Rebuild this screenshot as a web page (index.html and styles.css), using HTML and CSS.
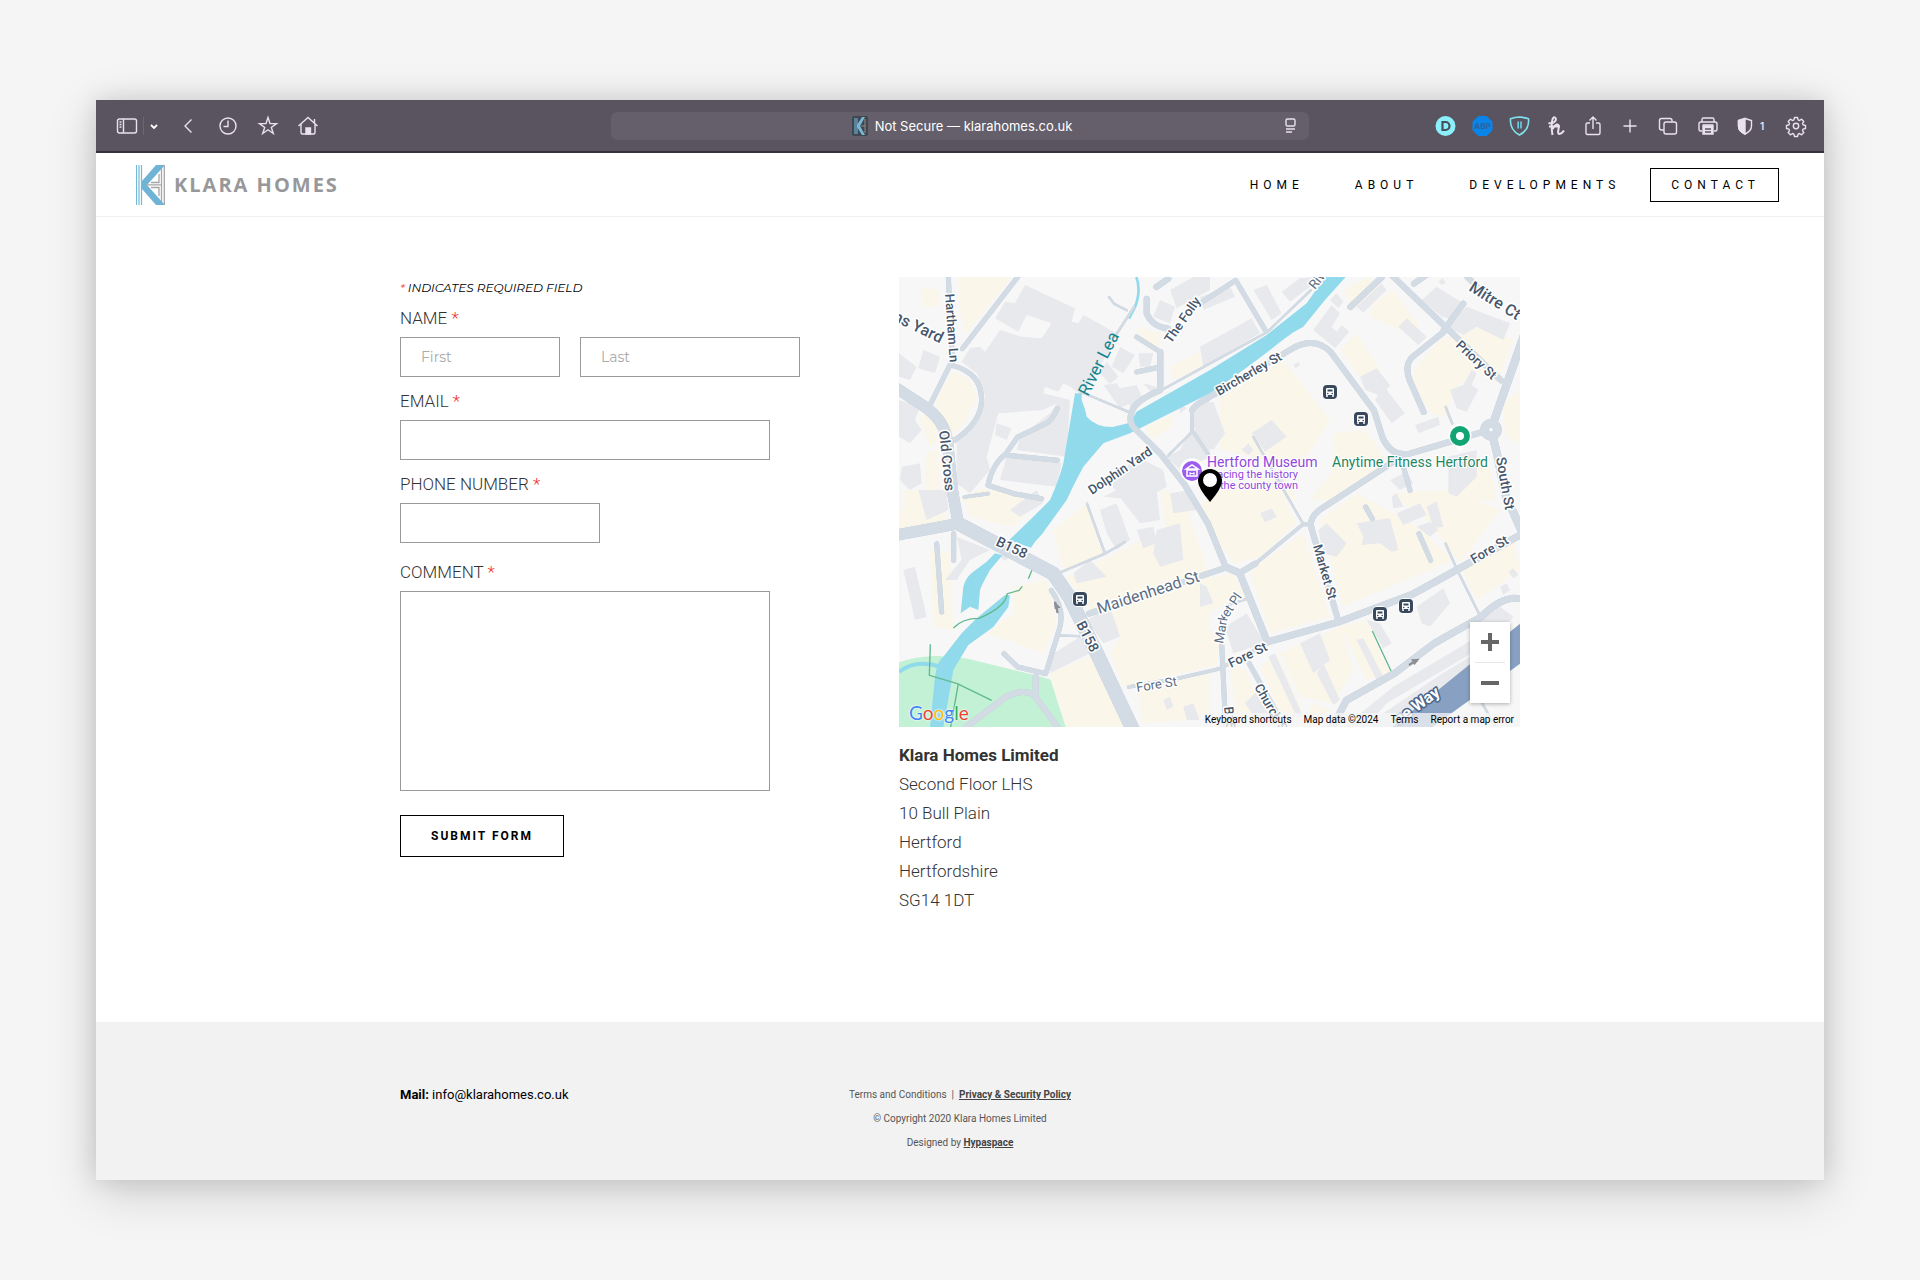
FILE: index.html
```html
<!DOCTYPE html>
<html lang="en">
<head>
<meta charset="utf-8">
<meta name="viewport" content="width=device-width, initial-scale=1">
<title>Contact | Klara Homes</title>
<link rel="stylesheet" href="styles.css">
</head>
<body>
<div class="window">
  <div class="toolbar">
    <div class="tools tools-left">
      <div class="tool-pair">
        <button class="tool" aria-label="Sidebar"><svg width="24" height="24" viewBox="0 0 24 24"><rect x="2.500" y="5" width="19" height="14" rx="2"/><path d="M8.500 5v14M4.500 8h2M4.500 10.500h2M4.500 13h2"/></svg></button>
        <span class="divider"></span>
        <button class="tool tool-small" aria-label="Tab groups"><svg width="12" height="24" viewBox="0 0 12 24"><path class="heavy" d="M3 11l3 3 3-3"/></svg></button>
      </div>
      <button class="tool" aria-label="Back"><svg width="24" height="24" viewBox="0 0 24 24"><path d="M15.500 5.500L9 12l6.500 6.500"/></svg></button>
      <button class="tool" aria-label="History"><svg width="24" height="24" viewBox="0 0 24 24"><circle cx="12" cy="12" r="8"/><path d="M12 6.500V12.500H7.500"/></svg></button>
      <button class="tool" aria-label="Bookmarks"><svg width="24" height="24" viewBox="0 0 24 24"><path d="M12 3.500l2 6 6.500.1-5.200 3.800 2 6.100-5.300-3.700-5.300 3.700 2-6.100L3.500 9.600l6.500-.1z"/></svg></button>
      <button class="tool" aria-label="Home"><svg width="24" height="24" viewBox="0 0 24 24"><path d="M2.500 12L12 3.500l9.500 8.500M5 10v8.500q0 1.500 1.500 1.500h11q1.500 0 1.500-1.500V10M18.500 9V5"/><path class="solid" d="M10 20v-6h4.500v6z"/></svg></button>
    </div>
    <div class="address">
      <svg class="favicon" width="16" height="20" viewBox="0 0 16 20"><rect width="16" height="20" rx="2" fill="#3f4751"/><path d="M3 2v16M5 2v16" stroke="#79bfe0"/><path d="M13 1h-3L5 9v2l5 8h3l-5-9z" fill="#79b9d8"/><path d="M13 3v14M9 10h4" stroke="#9a8b86"/></svg>
      <span>Not Secure — klarahomes.co.uk</span>
      <button class="tool reader" aria-label="Reader"><svg width="16" height="20" viewBox="0 0 16 20"><rect x="3" y="4" width="9" height="7" rx="1.500"/><path d="M3 14h9M3 17h6"/></svg></button>
    </div>
    <div class="tools tools-right">
      <div class="extensions">
        <button class="tool" aria-label="Dashlane"><svg width="24" height="24" viewBox="0 0 24 24"><circle cx="12.500" cy="12" r="10" fill="#8cf0fa" stroke="none"/><path d="M9.500 8h3a4 4 0 0 1 0 8h-3z" fill="none" stroke="#46505a" stroke-width="2.200"/></svg></button>
        <button class="tool" aria-label="Adblock Plus"><svg width="24" height="24" viewBox="0 0 24 24"><path d="M8.300 2h8.400l5.800 5.800v8.400l-5.800 5.800H8.300l-5.800-5.800V7.800z" fill="#0a84e8" stroke="none"/><text x="12.500" y="15" class="abp">ABP</text></svg></button>
        <button class="tool" aria-label="Privacy shield"><svg width="24" height="24" viewBox="0 0 24 24"><path d="M12.500 3q4.500.3 9 1.800 1 11-9 16.200-10-5.200-9-16.200 4.500-1.500 9-1.800z" stroke="#7fe3ee" stroke-width="1.600"/><path d="M11.200 7.500v7M14 7.500v7" stroke="#6fd0e8" stroke-width="1.600"/></svg></button>
        <button class="tool" aria-label="Honey"><svg width="24" height="24" viewBox="0 0 24 24"><path d="M4.500 9c6 1.500 9-4 6.500-5.500S6.500 9 8.500 21M8.800 15c2-5 6-6 6-2.500 0 3-2 7.500.7 7.500 2 0 3-1.500 4.500-3.500M5 12.500h11" stroke-width="2"/></svg></button>
        <button class="tool" aria-label="Share"><svg width="24" height="24" viewBox="0 0 24 24"><path d="M9 9H6.500Q5 9 5 10.500v8.500q0 1.500 1.500 1.500h11q1.500 0 1.500-1.500v-8.500Q19 9 17.500 9H15M12 15V3M8.500 6.500L12 3l3.500 3.500"/></svg></button>
        <button class="tool" aria-label="New tab"><svg width="24" height="24" viewBox="0 0 24 24"><path d="M12 5.500v13M5.500 12h13"/></svg></button>
      </div>
      <div class="actions">
        <button class="tool" aria-label="Tab overview"><svg width="24" height="24" viewBox="0 0 24 24"><rect x="8" y="8" width="12.500" height="12" rx="2"/><path d="M8 16H5.500Q3.500 16 3.500 14V6.500q0-2 2-2H14q2 0 2 2V8"/></svg></button>
        <button class="tool" aria-label="Print"><svg width="24" height="24" viewBox="0 0 24 24"><path d="M6 8V5.500Q6 4 7.500 4h9Q18 4 18 5.500V8M6 17H4.500Q3 17 3 15.500V10q0-2 2-2h14q2 0 2 2v5.500q0 1.500-1.500 1.500H18M6.500 11h11"/><path class="solid" d="M7 12h10v8H7z"/><path d="M9 15h6M9 18h6" stroke="#5a5460"/></svg></button>
        <button class="tool tool-wide" aria-label="Privacy report"><svg width="20" height="24" viewBox="0 0 20 24"><path d="M9 4.500l6.500 2v5.500q0 5-6.500 8-6.500-3-6.500-8V6.500z"/><path class="solid" d="M9 4.500v15.500q-6.500-3-6.500-8V6.500z"/></svg><span class="count">1</span></button>
        <button class="tool" aria-label="Settings"><svg width="24" height="24" viewBox="0 0 24 24"><circle cx="12" cy="12" r="2.700"/><path d="M10.500 3.500h3l.6 2.400 1.400.6 2.100-1.300 2.200 2.200-1.300 2.100.6 1.400 2.400.6v3l-2.400.6-.6 1.400 1.300 2.100-2.200 2.200-2.100-1.300-1.400.6-.6 2.400h-3l-.6-2.400-1.400-.6-2.100 1.300-2.200-2.200 1.300-2.100-.6-1.400-2.400-.6v-3l2.400-.6.6-1.400-1.300-2.100 2.200-2.200 2.100 1.300 1.400-.6z" stroke-linejoin="round"/></svg></button>
      </div>
    </div>
  </div>

  <header class="site-header">
    <a class="brand" href="#">
      <svg width="29" height="40" viewBox="0 0 29 40"><path d="M.500 0v40M3 0v40M5.500 0v40" stroke="#74b8d8" stroke-width="1.200"/><path d="M20 0h9L11 20l18 20h-9L6 24v-8z" fill="#6fb4d6"/><path d="M28.300 0v40M25.500 3v34M23 9v8.500H15M10 19.800h15M15 22.500h8V31" stroke="#a5a5a7" fill="none" stroke-width="1.300"/></svg>
      <span>KLARA HOMES</span>
    </a>
    <nav class="nav">
      <div class="nav-links"><a href="#">HOME</a><a href="#">ABOUT</a><a href="#">DEVELOPMENTS</a></div>
      <a class="nav-contact" href="#">CONTACT</a>
    </nav>
  </header>

  <main class="contact">
    <form class="form">
      <p class="note"><span class="req">*</span> INDICATES REQUIRED FIELD</p>
      <div class="field">
        <label for="first">NAME <span class="req">*</span></label>
        <div class="name-row">
          <input id="first" type="text" placeholder="First">
          <input id="last" type="text" placeholder="Last" aria-label="Last name">
        </div>
      </div>
      <div class="field"><label for="email">EMAIL <span class="req">*</span></label><input class="w-long" id="email" type="email"></div>
      <div class="field"><label for="phone">PHONE NUMBER <span class="req">*</span></label><input class="w-short" id="phone" type="tel"></div>
      <div class="field field-comment"><label for="comment">COMMENT <span class="req">*</span></label><textarea class="w-long" id="comment"></textarea></div>
      <button class="submit" type="submit">SUBMIT FORM</button>
    </form>

    <section class="location">
      <div class="map">
        <svg class="map-art" viewBox="0 0 1863 1350" preserveAspectRatio="xMidYMid slice" aria-hidden="true">
          <rect width="1863" height="1350" fill="#f8f7f8"/>
          <!-- parcels -->
          <g class="parcel">
            <g transform="translate(-27 -21)"><path d="M205 21H365L225 195L205 90ZM90 50L150 60V110H100ZM185 305L235 325L262 380L235 440L190 495L135 400ZM85 440L130 420L170 500L120 530ZM105 550L145 540L150 690H105ZM740 170L815 190L805 240L750 205ZM840 290L930 245L935 290L850 330ZM765 470L845 435L850 465L785 510ZM200 690L280 655L340 690Z"/></g>
            <g transform="translate(903 -21)"><path d="M60 380L250 270L390 450L300 590L60 540ZM430 60L500 21L540 50L460 120ZM520 100L580 60L660 170L600 180L510 140ZM420 240L470 190L540 300L480 320ZM640 300L720 210L850 170L940 210L890 340L830 300L760 360L740 440L690 430L640 330ZM400 490L500 480L560 580L500 640L420 690H330L400 600ZM800 600L870 590L890 690H780ZM910 400L960 360V520L915 500ZM160 620L250 600L290 690H130Z"/></g>
            <g transform="translate(-27 639)"><path d="M27 60L160 30L170 110L30 140ZM220 20L320 0L440 40L370 110L240 80ZM490 120L590 40L640 190L520 240ZM370 290L470 270L500 400L460 490L350 450L290 430L370 370ZM120 180L180 190L190 420L130 410ZM530 260L900 80L960 260V530L700 590L660 490L690 440L620 390ZM480 550L600 500L720 720H530ZM740 600L960 550V670L900 690L760 700ZM810 0L900 20L900 120L830 130ZM40 0H140V30L40 80Z"/></g>
            <g transform="translate(903 639)"><path d="M0 60L30 0H240L290 100L180 200L100 220L60 160ZM180 220L310 130L390 380L210 430L150 250ZM360 90L470 10L640 100L760 210L430 350ZM570 10L760 0L900 60L780 220L680 90ZM780 230L940 150L960 240L830 330ZM240 490L420 410L460 540L400 640L300 620ZM420 410L500 390L570 550L500 570ZM180 530L230 490L320 690H250ZM90 520L140 540L190 690H110ZM0 270L100 250L140 330L60 350L0 380ZM0 400L60 440L50 530H0ZM340 640L390 660L350 720H290Z"/></g>
          </g>
          <!-- buildings -->
          <g class="building">
            <g transform="translate(-27 -21)">
              <path d="M405 45L555 115L545 155L565 160L580 135L680 190L660 240L575 375L540 350L520 340L505 365L465 350L460 370L540 390L530 560L380 540L390 500L480 430L500 400L460 420L325 430L290 560L230 530L200 510L270 440L285 375L260 310L215 275L240 235L270 230L285 245L330 180L395 200L455 205L485 160L410 135L385 185L315 145L345 95L375 100Z"/>
              <path d="M200 510L290 560L300 600L240 670L200 640ZM350 560L515 580L500 650L330 630ZM320 460L365 475L350 510L315 495ZM100 240L150 260L135 310L85 295ZM27 250L80 290L60 330L27 320ZM27 390L90 410L75 450L95 480L60 520L27 500ZM35 590L90 580L95 640L60 660L30 630ZM690 230L735 255L700 310L665 290ZM745 250L790 250L780 290L750 290ZM650 275L685 320L660 342L630 310ZM640 345L680 340L720 400L690 415ZM690 355L740 345L760 390L720 410ZM760 340L800 350L790 375ZM810 90L855 110L840 160L790 140ZM840 60L910 21H960V60L860 115ZM900 420L960 370V545L920 500ZM865 400L890 415L870 430ZM940 240L960 220V270ZM740 560L820 600L830 650L760 690H700L660 640ZM830 560L870 540L900 480L960 560L920 580L870 600ZM640 680L700 650L740 690Z"/>
            </g>
            <g transform="translate(903 -21)"><path d="M0 80L90 50L105 80L10 120ZM160 60L200 45L245 130L215 150ZM245 65L300 25L345 21L330 50L270 95ZM0 230L155 145L180 190L10 290ZM340 180L395 105L420 130L395 170L410 185L425 165L448 185L405 235ZM390 90L410 70L430 95L415 115ZM595 170L620 145L680 200L655 225ZM470 110L545 40L560 60L490 128ZM665 90L710 50L790 100L760 150L725 140ZM740 170L800 110L930 160L910 210L830 170L790 195ZM480 320L530 295L570 345L560 360L615 430L575 460L525 390L535 375L495 360ZM750 360L790 345L815 300L830 310L815 345L835 360L800 425L770 415ZM645 465L715 440L720 465L655 490ZM155 490L215 450L260 500L195 545ZM0 410L40 395L75 490L40 540L0 520ZM125 540L145 520L160 540L145 555ZM280 285L295 275L300 285L287 295ZM570 630L620 605L640 640L600 660ZM745 560L830 540V620L770 680L745 670ZM210 640L245 620L260 650ZM715 35L728 25L738 38L725 45Z"/></g>
            <g transform="translate(-27 639)"><path d="M200 140L300 180L240 210L200 270L165 270L215 210ZM40 240L75 230L110 380L75 390ZM85 0L170 0L175 60L110 90ZM630 60L680 40L720 150L680 180L650 130ZM680 10L720 0H800L810 90L750 100ZM740 120L790 110L800 160L760 175ZM800 120L870 100L880 210L810 230L790 190ZM360 60L440 0L460 40L390 80ZM550 250L600 210L650 260L560 280ZM590 390L660 350L690 440L640 460ZM475 500L570 440L600 490L480 550ZM330 200L345 190L360 200L345 213ZM840 10L900 0L920 60L850 70ZM820 630L840 620L850 650L830 660ZM880 650L910 640L930 690H890Z"/></g>
            <g transform="translate(903 639)"><path d="M180 70L215 55L230 80L195 97ZM355 120L380 100L440 160L410 200L370 190ZM470 100L530 90L570 85L595 180L575 185L540 160L485 165L490 140ZM575 20L590 10L610 50L580 55ZM590 70L660 40L680 75L610 105ZM680 50L710 35L730 110L700 115ZM650 110L690 95L715 120L690 140ZM650 350L730 295L750 340L690 410L665 400ZM300 460L360 430L390 510L340 550ZM500 390L540 400L575 460L550 475ZM470 450L490 445L550 560L530 570ZM370 520L420 630L400 645L350 550ZM205 500L225 490L310 680H290ZM75 410L140 370L195 460L100 490ZM0 280L20 290L40 340L0 350ZM135 640L175 600L210 690H170ZM520 690L720 555L810 500V560L620 720H500ZM420 720L580 590L850 430L830 380L900 350L940 380L900 440L560 640L490 720ZM900 290L920 280L930 300L910 315ZM925 245L940 235L955 255L940 265Z"/></g>
          </g>
          <path class="rail" d="M1480 1350L1863 1040V1160L1600 1350Z"/>
          <path class="park" d="M0 1156Q40 1140 110 1136L200 1144L430 1200L455 1208L500 1350H0Z"/>
          <!-- river and its branches -->
          <path class="water" d="M1278 0H1340L1278 69L1213 149Q1180 165 1150 190Q1050 270 933 349L693 469L613 499L553 569Q525 620 503 669L430 770L408 794L396 812L330 790L393 729L453 669Q480 610 493 559L508 469L528 349H548V369Q560 400 563 419Q590 450 640 450L693 437L713 404L933 279L1103 174L1223 79Z"/>
          <path class="water" d="M288 829L310 835L273 879Q250 920 243 939L238 999L213 989L185 1009L193 929Q200 900 223 884L263 854ZM333 955L328 990L283 1050L208 1104L163 1179L153 1239L133 1350H93L108 1199Q115 1150 133 1139L188 1069L233 1024L318 954Z"/>
          <path class="stream" d="M712 0Q727 40 708 90L690 125" stroke-width="8"/>
          <path class="stream" d="M0 1185Q50 1145 125 1170" stroke-width="12"/>
          <path class="trail" d="M163 1053Q190 1024 240 1024Q320 990 325 950L360 940L370 928M388 905L400 877M94 1102L91 1195L175 1220L278 1270M178 1220L155 1350M1420 1062L1480 1190"/>
          <!-- streets, grouped by width -->
          <g class="streets">
            <path stroke-width="42" d="M178 740L463 890L511 960L594 1130L707 1370"/>
            <path stroke-width="34" d="M-10 332L71 385Q140 430 146 500L160 640L178 740M-10 775L178 740"/>
            <path stroke-width="24" d="M1880 160L1776 457L1794 530L1818 650L1880 790"/>
            <path stroke-width="21" d="M980 870L1022 888L1105 1095L1319 1035L1544 950L1880 765M1880 965L1863 965Q1810 955 1746 1020L1604 1100L1485 1190L1342 1270L1290 1370"/>
            <path stroke-width="18" d="M743 65V110Q760 150 808 155M784 225V340Q710 370 698 405T713 460L784 530L855 620L927 740L980 870M879 400Q890 380 950 350L1188 210Q1250 180 1295 225L1402 370L1425 400L1450 480Q1475 540 1532 530L1651 495L1776 457M1634 165L1540 240Q1515 265 1532 310L1574 405M1449 0L1354 90M1580 -5L1545 20M1705 0L1735 30M1497 545L1260 700Q1235 720 1235 745L1319 1035M410 1200V1250M202 1350L320 1260Q380 1230 410 1260L475 1350M772 30L808 5M1473 -10L1640 150L1806 310M1693 80L1634 160M570 1010L986 870M1022 888L1069 860"/>
            <path stroke-width="15" d="M148 0L160 250L95 380M356 0L190 215M160 265Q255 290 247 380Q240 440 166 490M475 395Q460 430 440 440L356 480L321 530Q280 560 267 625L345 650L428 665M327 535L475 550M113 800L128 1005M164 770V850M879 95L1010 10L1099 160M713 180L784 225M713 285L784 270M1508 550L1533 640M457 940Q500 1000 480 1060L440 1190L356 1170L315 1130M968 1100L980 1350M1051 1160L1129 1300M1400 690L1420 725M1560 770L1595 850"/>
            <path stroke-width="11" d="M196 660L267 650M1212 742L1069 860L1028 885M1105 1100L962 1175L832 1205L689 1230M879 400V460L927 530M1212 742H1235"/>
            <path stroke-width="7" d="M546 345L701 410M1235 40L1105 165L713 380M630 60L645 80L683 100M705 90L647 180M879 465L808 535M1063 480L1212 740M1045 965L986 985L968 1100M1640 800L1675 880L1740 1010M475 1075L560 1078M564 680L618 830L487 885M618 830L677 795M1640 390L1660 440M1750 1280L1790 1350"/>
            <circle cx="1776" cy="458" r="22" stroke-width="20"/>
          </g>
          <circle cx="1776" cy="458" r="14" fill="#d3dce4"/><circle cx="1776" cy="458" r="5" fill="#fff"/>
          <path d="M468 975L476 1008" stroke="#8c8f94" stroke-width="7"/><path d="M465 972l20 20-18 4z" fill="#8c8f94"/>
          <path d="M1530 1164L1554 1150" stroke="#8c8f94" stroke-width="7"/><path d="M1562 1145l-26 2 10 18z" fill="#8c8f94"/>
        </svg>
        <svg class="map-labels" viewBox="0 0 621 450" preserveAspectRatio="xMidYMid slice">
          <g class="street">
            <text transform="translate(46 17) rotate(86)">Hartham Ln</text>
            <text class="big" transform="translate(-7 43) rotate(26)">ns Yard</text>
            <text class="river" transform="translate(189 120) rotate(-63)">River Lea</text>
            <text transform="translate(272 67) rotate(-55)">The Folly</text>
            <text class="mid" transform="translate(40 154) rotate(84)">Old Cross</text>
            <text transform="translate(193 218) rotate(-34)">Dolphin Yard</text>
            <text class="big" transform="translate(569 13) rotate(32)">Mitre Ct</text>
            <text class="soft" transform="translate(416 13) rotate(-52)">Riv</text>
            <text transform="translate(320 119) rotate(-30)">Bircherley St</text>
            <text transform="translate(556 69) rotate(43)">Priory St</text>
            <text class="mid" transform="translate(597 181) rotate(80)">South St</text>
            <text class="mid" transform="translate(96 268) rotate(25)">B158</text>
            <text class="mid" transform="translate(177 347) rotate(63)">B158</text>
            <text class="soft big" transform="translate(200 337) rotate(-18)">Maidenhead St</text>
            <text class="soft" transform="translate(238 415) rotate(-9)">Fore St</text>
            <text transform="translate(332 391) rotate(-26)">Fore St</text>
            <text class="soft" transform="translate(324 367) rotate(-80)">Mark</text>
            <text class="soft" transform="translate(329 341) rotate(-56)">et Pl</text>
            <text transform="translate(414 269) rotate(74)">Market St</text>
            <text transform="translate(575 287) rotate(-31)">Fore St</text>
            <text transform="translate(355 410) rotate(60)">Church St</text>
            <text transform="translate(325 430) rotate(84)">B158</text>
            <text class="way" transform="translate(500 448) rotate(-36)">ne Way</text>
          </g>
          <g class="place">
            <text class="museum" x="308" y="190">Hertford Museum</text>
            <text class="museum tiny" x="399" y="201">acing the history</text>
            <text class="museum tiny" x="399" y="212">the county town</text>
            <text class="fitness" x="433" y="190">Anytime Fitness Hertford</text>
          </g>
          <defs><g id="bus"><rect x="-8" y="-8" width="16" height="16" rx="6" fill="#fff"/><rect x="-7" y="-7" width="14" height="14" rx="4" fill="#38495e"/><path d="M-4-3q0-1 1-1h6q1 0 1 1v6h-8z" fill="#fff"/><path d="M-2.500-2.500h5v2h-5z" fill="#38495e"/><path d="M-3 3v2M3 3v2" stroke="#fff" stroke-width="1.500"/><circle cx="-2.200" cy="1.500" r=".8" fill="#38495e"/><circle cx="2.200" cy="1.500" r=".8" fill="#38495e"/></g></defs>
          <use href="#bus" x="431" y="115"/><use href="#bus" x="462" y="142"/><use href="#bus" x="181" y="322"/><use href="#bus" x="481" y="337"/><use href="#bus" x="507" y="329"/>
          <path d="M293 209l-7-6a12 12 0 1 1 14 0z" fill="#fff"/><circle cx="293" cy="194" r="10" fill="#9d5cf0"/><path d="M287 192l6-4 6 4zM288 193h10v6h-10z" fill="none" stroke="#fff" stroke-width="1.500"/><path d="M291 195v3M295 195v3M291 196.500h4" stroke="#fff"/>
          <path d="M561 175l-6-7a11.500 11.500 0 1 1 12 0z" fill="#fff"/><circle cx="561" cy="159" r="10" fill="#12a573"/><circle cx="561" cy="159" r="4" fill="#fff"/>
          <path d="M311 225q-12-14-12-21a12 12 0 0 1 24 0q0 7-12 21z"/><circle cx="311" cy="203" r="7" fill="#fff"/>
        </svg>
        <div class="google"><span class="g-blue">G</span><span class="g-red">o</span><span class="g-yellow">o</span><span class="g-blue">g</span><span class="g-green">l</span><span class="g-red">e</span></div>
        <div class="zoom">
          <button aria-label="Zoom in"><svg width="18" height="18" viewBox="0 0 18 18"><path d="M9 0v18M0 9h18" stroke="#666" stroke-width="4"/></svg></button>
          <button aria-label="Zoom out"><svg width="18" height="18" viewBox="0 0 18 18"><path d="M0 9h18" stroke="#666" stroke-width="4"/></svg></button>
        </div>
        <div class="credits"><a href="#">Keyboard shortcuts</a><span>Map data ©2024</span><a href="#">Terms</a><a href="#">Report a map error</a></div>
      </div>
      <address class="postal"><strong>Klara Homes Limited</strong><br>Second Floor LHS<br>10 Bull Plain<br>Hertford<br>Hertfordshire<br>SG14 1DT</address>
    </section>
  </main>

  <footer class="site-footer">
    <div class="footer-inner">
      <p class="mail"><strong>Mail:</strong> info@klarahomes.co.uk</p>
      <div class="legal">
        <p>Terms and Conditions &nbsp;|&nbsp; <a href="#">Privacy &amp; Security Policy</a></p>
        <p>© Copyright 2020 Klara Homes Limited</p>
        <p>Designed by <a href="#">Hypaspace</a></p>
      </div>
    </div>
  </footer>
</div>
</body>
</html>
```
FILE: styles.css
```css
* { box-sizing: border-box; }

body {
  margin: 0;
  padding: 100px 5%;
  background: #f5f5f5;
  font-family: Roboto, "Liberation Sans", sans-serif;
  color: #000;
}

p { margin: 0; }
a { color: inherit; text-decoration: none; }
button, input, textarea { font: inherit; color: inherit; margin: 0; }
button { cursor: pointer; }
svg { display: block; }

.window {
  background: #fff;
  box-shadow: 0 0 24px rgba(0, 0, 0, .12), 0 12px 48px rgba(0, 0, 0, .16);
}

/* Browser toolbar */
.toolbar {
  display: grid;
  grid-template-columns: 1fr minmax(200px, 698px) 1fr;
  align-items: center;
  height: 53px;
  background: #5a5460;
  border-bottom: 2px solid #37313d;
  font-family: Inter, "Liberation Sans", sans-serif;
}
.tools { display: flex; align-items: center; }
.tools-left { gap: 16px; padding-left: 19px; }
.tools-right { justify-content: flex-end; gap: 14px; padding-right: 16px; }
.tool-pair { display: flex; align-items: center; gap: 4px; }
.divider { width: 1px; height: 18px; background: #6d6775; }
.extensions { display: flex; gap: 13px; }
.actions { display: flex; gap: 16px; }
.tool {
  display: flex;
  align-items: center;
  width: 24px;
  height: 24px;
  padding: 0;
  border: 0;
  background: none;
  color: #e9e2ee;
}
.tool-small { width: 12px; }
.tool-wide { width: 32px; }
.tool svg { fill: none; stroke: currentColor; stroke-width: 1.4; }
.tool .heavy { stroke-width: 1.8; stroke: #fff; }
.tool .solid { fill: currentColor; }
.tool .abp { font: 700 8px Inter, sans-serif; fill: #2a63a0; stroke: none; text-anchor: middle; }
.count { width: 12px; font-size: 10px; font-weight: 600; text-align: center; }
.address {
  position: relative;
  display: flex;
  align-items: center;
  justify-content: center;
  gap: 7px;
  height: 28px;
  padding-left: 4px;
  border-radius: 6px;
  background: #655f6b;
  color: #fff;
  font-size: 13px;
}
.reader { position: absolute; right: 10px; top: 1px; width: 16px; }

/* Site header */
.site-header {
  display: flex;
  align-items: center;
  justify-content: space-between;
  height: 64px;
  padding: 0 45px 0 40px;
  border-bottom: 1px solid #f1f1f1;
}
.brand {
  display: flex;
  align-items: center;
  gap: 9px;
  color: #98989a;
  font: 700 20px "Open Sans", sans-serif;
  letter-spacing: 2px;
}
.nav, .nav-links { display: flex; align-items: center; }
.nav { gap: 30px; font-size: 12px; letter-spacing: 5px; }
.nav-links { gap: 51px; }
.nav-contact { padding: 0 18px 0 20px; border: 1px solid #000; line-height: 32px; }

/* Contact form */
.contact {
  display: grid;
  grid-template-columns: 400px 1fr;
  gap: 99px;
  max-width: 1120px;
  margin: 0 auto;
  padding: 60px 0 107px;
}
.note { margin-bottom: -5px; font: italic 12px/22px Montserrat, Inter, sans-serif; }
.req { color: #f03030; }
.form { display: flex; flex-direction: column; align-items: flex-start; gap: 12px; }
.field { display: flex; flex-direction: column; align-items: flex-start; gap: 7px; width: 100%; }
.field label { font-size: 17px; line-height: 24px; font-weight: 300; color: #333; }
.field-comment { margin-top: 5px; }
.field input, .field textarea {
  height: 40px;
  padding: 0 20px;
  border: 1px solid #999;
  border-radius: 0;
  background: #fff;
  font: 14px Montserrat, Inter, sans-serif;
}
.field textarea { height: 200px; padding: 10px 20px; resize: none; }
.field input::placeholder { color: #aaa; opacity: 1; }
.name-row { display: grid; grid-template-columns: 160px 220px; gap: 20px; }
.name-row input { width: 100%; }
.field .w-long { width: 370px; }
.field .w-short { width: 200px; }
.submit {
  height: 42px;
  margin-top: 12px;
  padding: 0 30px;
  border: 1px solid #000;
  background: #fff;
  font-size: 12px;
  font-weight: 700;
  letter-spacing: 2px;
}

/* Map */
.map { position: relative; height: 450px; overflow: hidden; }
.map-art, .map-labels { position: absolute; inset: 0; width: 100%; height: 100%; }
.parcel { fill: #fbf6ea; }
.building { fill: #e8e9ed; }
.rail { fill: #88a1c2; }
.park { fill: #c3f1d5; }
.water { fill: #90daec; }
.stream { fill: none; stroke: #90daec; }
.trail { fill: none; stroke: #5fb98c; stroke-width: 4; }
.streets {
  fill: none;
  stroke: #d3dce4;
  stroke-linecap: round;
  stroke-linejoin: round;
  filter: drop-shadow(0 0 1px #b8c4d0);
}
.street text {
  font-size: 13px;
  font-weight: 500;
  fill: #46566b;
  stroke: #fff;
  stroke-width: 3px;
  stroke-linejoin: round;
  paint-order: stroke;
}
.street .big { font-size: 16px; }
.street .mid { font-size: 14px; }
.street .soft { font-weight: 400; fill: #5d6c80; }
.street .river { font-size: 17px; font-weight: 400; fill: #15858c; stroke: none; }
.street .way { font-size: 16px; font-weight: 700; fill: #fff; stroke: #4a648c; }
.place text { font-size: 14px; stroke: #fff; stroke-width: 2px; paint-order: stroke; }
.place .museum { fill: #9147dc; }
.place .tiny { font-size: 11px; text-anchor: end; }
.place .fitness { fill: #1e8763; }
.google {
  position: absolute;
  left: 10px;
  bottom: 2px;
  font: 19px/24px Lato, sans-serif;
  text-shadow: 0 0 2px #fff, 0 0 2px #fff;
}
.g-blue { color: #4285f4; }
.g-red { color: #ea4335; }
.g-yellow { color: #fbbc05; }
.g-green { color: #34a853; }
.zoom {
  position: absolute;
  right: 10px;
  bottom: 24px;
  width: 40px;
  padding: 0 5px;
  background: #fff;
  box-shadow: 0 1px 4px rgba(0, 0, 0, .3);
}
.zoom button {
  display: flex;
  align-items: center;
  justify-content: center;
  width: 30px;
  height: 40px;
  padding: 0;
  border: 0;
  background: none;
}
.zoom button + button { height: 41px; border-top: 1px solid #e6e6e6; }
.credits {
  position: absolute;
  right: 0;
  bottom: 0;
  display: flex;
  font-size: 10px;
  line-height: 14px;
}
.credits > * { padding: 0 6px; background: rgba(245, 245, 245, .75); }
.postal {
  margin-top: 14px;
  font-size: 17px;
  line-height: 29px;
  font-style: normal;
  font-weight: 300;
  color: #333;
}
.postal strong { font-weight: 700; }

/* Footer */
.site-footer { padding: 61px 0 25px; background: #f2f2f2; }
.footer-inner {
  display: grid;
  grid-template-columns: 1fr auto 1fr;
  max-width: 1120px;
  margin: 0 auto;
  line-height: 24px;
}
.mail { font-size: 13px; }
.mail strong { font-weight: 700; }
.legal { font-size: 10px; color: #555; text-align: center; }
.legal a { font-weight: 700; text-decoration: underline; color: #444; }
```
